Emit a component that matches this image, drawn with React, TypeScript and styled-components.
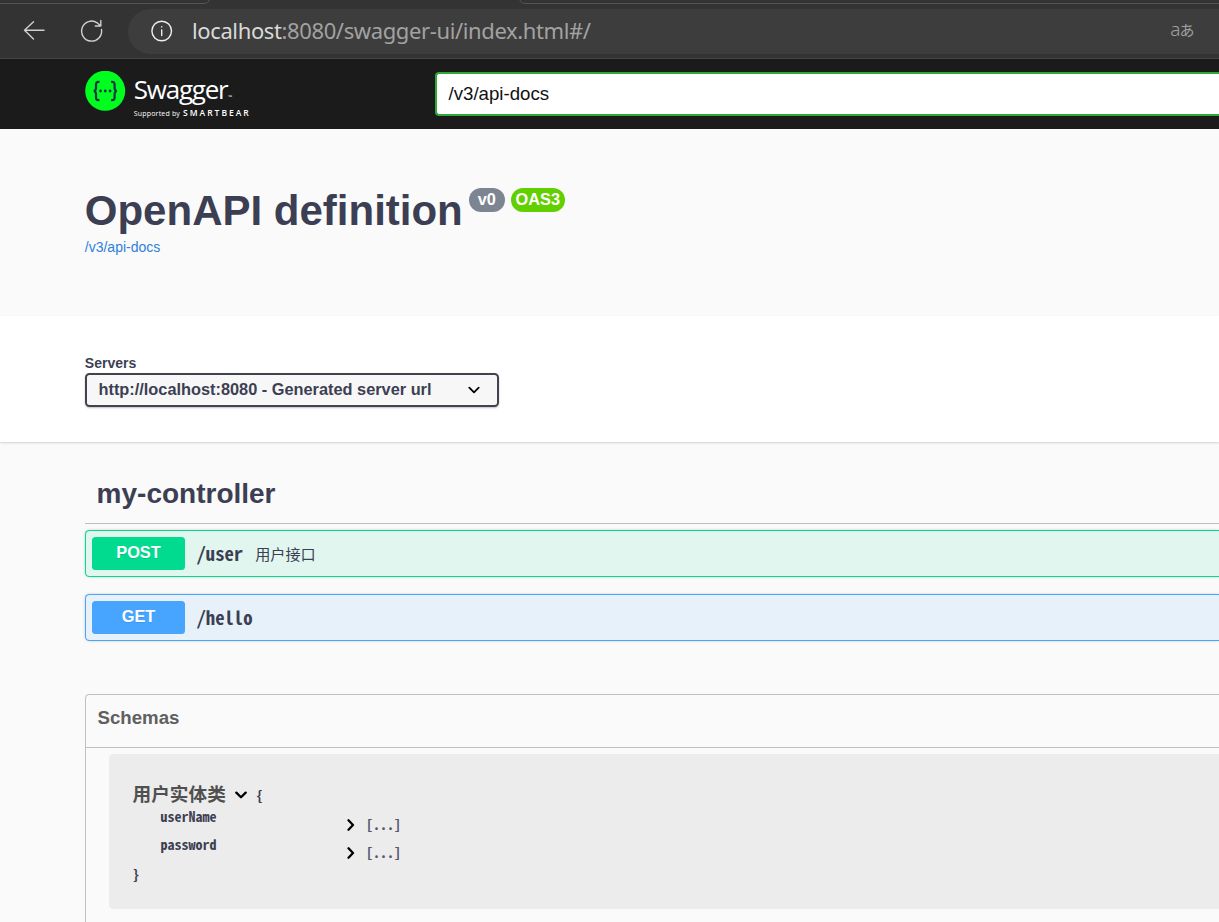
import React from "react";
import styled, { createGlobalStyle } from "styled-components";

const Global = createGlobalStyle`
  * { box-sizing: border-box; }
  html, body { margin: 0; padding: 0; }
  body {
    background: #fafafa;
    color: #3c3f53;
    font-family: "Liberation Sans", "Noto Sans CJK SC", sans-serif;
    overflow: hidden;
  }
`;

const mono = `"Noto Sans Mono CJK SC", "Liberation Mono", monospace`;

const Page = styled.div`
  width: 100%;
  height: 922px;
  overflow: hidden;
`;

const TabStrip = styled.svg`
  display: block;
  width: 100%;
  height: 9px;
`;

const Browser = styled.header`
  height: 59px;
  background: #333333;
  border-bottom: 1px solid #454545;
`;

const NavBar = styled.div`
  display: flex;
  align-items: center;
  height: 45px;
  padding-left: 20px;
`;

const NavIcon = styled.svg<{ $gap: number; $color?: string }>`
  flex: none;
  width: 28px;
  height: 28px;
  margin: -2px ${(p) => p.$gap}px 0 0;
  fill: none;
  stroke: ${(p) => p.$color ?? "#d0d0d0"};
  stroke-width: 1.4;
  stroke-linecap: round;
  stroke-linejoin: round;
`;

const AddressBar = styled.div`
  display: flex;
  align-items: center;
  flex: 1;
  height: 45px;
  padding: 0 24.5px 0 20px;
  border-radius: 23px 0 0 23px;
  background: #3d3d3d;
`;

const Url = styled.div`
  flex: 1;
  padding-bottom: 3px;
  font: 22px/30px "Noto Sans", sans-serif;
  letter-spacing: -0.38px;
  color: #a2a2a2;
  white-space: nowrap;
`;

const Host = styled.span`
  color: #d9d9d9;
`;

const Translate = styled.span`
  display: flex;
  align-items: baseline;
  padding-bottom: 4px;
  font: 300 19px/24px "Noto Sans", "Noto Sans CJK JP", sans-serif;
  color: #a0a0a0;
  small { margin-left: -1px; font-size: 15px; font-weight: 400; }
`;

const Topbar = styled.div`
  display: flex;
  align-items: center;
  height: 70px;
  padding-left: 85px;
  background: #1b1b1b;
`;

const Logo = styled.div`
  display: flex;
  width: 350px;
  height: 46px;
  color: #fff;
`;

const LogoMark = styled.svg`
  width: 41px;
  height: 41px;
`;

const LogoText = styled.div`
  margin-left: 7.8px;
  font-family: "Open Sans", sans-serif;
  white-space: nowrap;
`;

const LogoName = styled.div`
  height: 37px;
  font-size: 26px;
  line-height: 37px;
  letter-spacing: -1.25px;
  small { margin-left: 1px; font-size: 5px; }
`;

const LogoTag = styled.div`
  display: flex;
  align-items: baseline;
  gap: 3px;
  font-size: 7px;
  line-height: 9px;
  letter-spacing: 0.18px;
  b { font-size: 8.5px; font-weight: 600; letter-spacing: 2px; }
`;

const SpecInput = styled.div`
  flex: 1;
  height: 44px;
  padding-left: 11.5px;
  border: 2px solid #2fa839;
  border-right: 0;
  border-radius: 4px 0 0 4px;
  background: #fff;
  color: #111;
  font-size: 18.67px;
  line-height: 40px;
`;

const Info = styled.section`
  height: 187px;
  padding: 57px 0 0 84.8px;
`;

const Title = styled.h1`
  display: flex;
  margin: 0;
  font-size: 42px;
  line-height: 50px;
`;

const Badge = styled.span<{ $color: string; $width: number }>`
  width: ${(p) => p.$width}px;
  height: 24px;
  margin: 2px 0 0 6px;
  border-radius: 12px;
  background: ${(p) => p.$color};
  color: #fff;
  font-size: 16.33px;
  line-height: 23px;
  text-align: center;
`;

const SpecLink = styled.a`
  display: block;
  margin-top: 2px;
  color: #2f80dc;
  font-size: 14px;
  line-height: 18px;
`;

const Servers = styled.section`
  height: 126px;
  padding: 38px 0 0 85px;
  background: #fff;
  box-shadow: 0 1px 2px rgba(0, 0, 0, 0.16);
`;

const ServerLabel = styled.div`
  height: 19px;
  margin-left: -0.2px;
  font-size: 14px;
  font-weight: 700;
  line-height: 18px;
`;

const Select = styled.div`
  display: flex;
  justify-content: space-between;
  width: 414px;
  height: 34px;
  padding: 0 17.5px 0 11.5px;
  border: 2px solid #41444e;
  border-radius: 4.5px;
  background: #f7f7f7;
  box-shadow: 0 1px 2px rgba(0, 0, 0, 0.25);
  font-size: 16.33px;
  font-weight: 700;
  line-height: 28px;
`;

const Chevron = styled.svg<{ $weight: number; $top: number }>`
  flex: none;
  width: 12px;
  height: 12px;
  margin-top: ${(p) => p.$top}px;
  fill: none;
  stroke: #000;
  stroke-width: ${(p) => p.$weight};
  stroke-linecap: round;
  stroke-linejoin: round;
`;

const Operations = styled.section`
  padding: 28px 0 0 85px;
`;

const TagTitle = styled.h3`
  height: 54px;
  margin: 0 0 6px;
  padding-left: 11.6px;
  border-bottom: 1px solid #bdbfc4;
  font-size: 28px;
  line-height: 47px;
`;

const Operation = styled.div<{ $color: string; $tint: string }>`
  display: flex;
  align-items: center;
  height: 47px;
  margin-bottom: 17px;
  padding-left: 6px;
  border: 1px solid ${(p) => p.$color};
  border-right: 0;
  border-radius: 4.5px 0 0 4.5px;
  background: ${(p) => p.$tint};
  box-shadow: 0 0 3px rgba(0, 0, 0, 0.19);
`;

const Method = styled.span<{ $color: string }>`
  width: 93px;
  height: 33px;
  border-radius: 3.5px;
  background: ${(p) => p.$color};
  color: #fff;
  font-size: 16.33px;
  font-weight: 700;
  line-height: 31px;
  text-align: center;
  text-shadow: 0 1px 0 rgba(0, 0, 0, 0.1);
`;

const Path = styled.span`
  margin-left: 11.5px;
  padding-bottom: 2px;
  font: 700 18.67px/28px ${mono};
`;

const Summary = styled.span`
  margin-left: 12px;
  padding-bottom: 2px;
  font-size: 15.17px;
`;

const Schemas = styled.section`
  height: 240px;
  margin: 53px 0 0 85px;
  border: 1px solid #bfc0c7;
  border-right: 0;
  border-radius: 4.5px 0 0 0;
`;

const SchemasTitle = styled.h4`
  height: 53px;
  margin: 0 0 6px;
  padding-left: 11.5px;
  border-bottom: 1px solid #bfc0c7;
  color: #606060;
  font-size: 18.67px;
  line-height: 46px;
`;

const Model = styled.div`
  height: 155px;
  margin-left: 23px;
  padding: 27px 0 0 23.5px;
  border-radius: 4.5px 0 0 4.5px;
  background: #ececec;
  font: 700 14px/28px ${mono};
`;

const ModelHead = styled.div`
  display: flex;
  align-items: center;
  height: 25px;
`;

const ModelName = styled.span`
  margin: 2px 9.2px 0 0;
  color: #505050;
  font: 700 18.67px/28px "Liberation Sans", "Noto Sans CJK SC", sans-serif;
`;

const Brace = styled.span`
  margin: 2px 0 0 9px;
`;

const Property = styled.div`
  display: flex;
  height: 28px;
  padding-left: 28px;
  line-height: 21px;
`;

const PropertyName = styled.span`
  width: 184px;
`;

const PropertyType = styled.span`
  display: flex;
  align-items: center;
  gap: 9.5px;
  height: 28px;
  padding-top: 9px;
  color: #55576b;
`;

const CloseBrace = styled.div`
  line-height: 24px;
`;

const Down = ({ weight = 2.3, top = 0 }: { weight?: number; top?: number }) => (
  <Chevron $weight={weight} $top={top} viewBox="0 0 12 12">
    <path d="M1.3 3.6 6 8.3 10.7 3.6" />
  </Chevron>
);

const Right = () => (
  <Chevron $weight={2.3} $top={0} viewBox="0 0 12 12">
    <path d="M3.5 1.3 8 6 3.5 10.7" />
  </Chevron>
);

const operations = [
  { method: "POST", path: "/user", summary: "用户接口", color: "#00db90", tint: "#e1f6ee" },
  { method: "GET", path: "/hello", summary: "", color: "#47a4ff", tint: "#e7f1fa" },
];

export default function App() {
  return (
    <Page>
      <Global />
      <Browser>
        <TabStrip viewBox="0 0 1219 9" preserveAspectRatio="none">
          <path d="M0 3.5H203Q209 3.5 209 0M520 0Q520 3.5 526 3.5H1219" fill="none" stroke="#555" />
        </TabStrip>
        <NavBar>
          <NavIcon $gap={29} viewBox="0 0 28 28">
            <path d="M24 13.3H4.7M13.5 4.7 4.5 13.3l9 8.8" />
          </NavIcon>
          <NavIcon $gap={23} viewBox="0 0 28 28">
            <path d="M24.5 12.5A10 10 0 1 1 20.2 5.8L23.6 9M23.8 3.5V9H18.3" />
          </NavIcon>
          <AddressBar>
            <NavIcon $gap={16} $color="#eeeeee" viewBox="0 0 28 28">
              <circle cx="13.7" cy="14" r="9.8" />
              <path d="M13.7 13v5.5M13.7 9.6v.3" />
            </NavIcon>
            <Url>
              <Host>localhost</Host>:8080/swagger-ui/index.html#/
            </Url>
            <Translate>
              a<small>あ</small>
            </Translate>
          </AddressBar>
        </NavBar>
      </Browser>
      <Topbar>
        <Logo>
          <LogoMark viewBox="0 0 41 41">
            <circle cx="20.2" cy="19.8" r="20" fill="#00ff1e" />
            <path
              d="M14.5 10.8h-1.2q-2.3 0-2.3 2.7v3.2q0 3-2.2 3.3 2.2.3 2.2 3.3v3.2q0 2.7 2.3 2.7h1.2M26.1 10.8h1.2q2.3 0 2.3 2.7v3.2q0 3 2.2 3.3-2.2.3-2.2 3.3v3.2q0 2.7-2.3 2.7h-1.2"
              fill="none"
              stroke="#173647"
              strokeWidth="2.2"
            />
            <g fill="#173647">
              <circle cx="15.5" cy="20" r="1.4" />
              <circle cx="20.3" cy="20" r="1.4" />
              <circle cx="25.1" cy="20" r="1.4" />
            </g>
          </LogoMark>
          <LogoText>
            <LogoName>
              Swagger<small>™</small>
            </LogoName>
            <LogoTag>
              <span>Supported by</span>
              <b>SMARTBEAR</b>
            </LogoTag>
          </LogoText>
        </Logo>
        <SpecInput>/v3/api-docs</SpecInput>
      </Topbar>
      <Info>
        <Title>
          OpenAPI definition
          <Badge $color="#7d8492" $width={36}>v0</Badge>
          <Badge $color="#62d000" $width={54}>OAS3</Badge>
        </Title>
        <SpecLink>/v3/api-docs</SpecLink>
      </Info>
      <Servers>
        <ServerLabel>Servers</ServerLabel>
        <Select>
          http://localhost:8080 - Generated server url
          <Down weight={1.8} top={9} />
        </Select>
      </Servers>
      <Operations>
        <TagTitle>my-controller</TagTitle>
        {operations.map((op) => (
          <Operation key={op.path} $color={op.color} $tint={op.tint}>
            <Method $color={op.color}>{op.method}</Method>
            <Path>{op.path}</Path>
            {op.summary && <Summary>{op.summary}</Summary>}
          </Operation>
        ))}
      </Operations>
      <Schemas>
        <SchemasTitle>Schemas</SchemasTitle>
        <Model>
          <ModelHead>
            <ModelName>用户实体类</ModelName>
            <Down top={3} />
            <Brace>{"{"}</Brace>
          </ModelHead>
          {["userName", "password"].map((name) => (
            <Property key={name}>
              <PropertyName>{name}</PropertyName>
              <PropertyType>
                <Right />
                [...]
              </PropertyType>
            </Property>
          ))}
          <CloseBrace>{"}"}</CloseBrace>
        </Model>
      </Schemas>
    </Page>
  );
}
